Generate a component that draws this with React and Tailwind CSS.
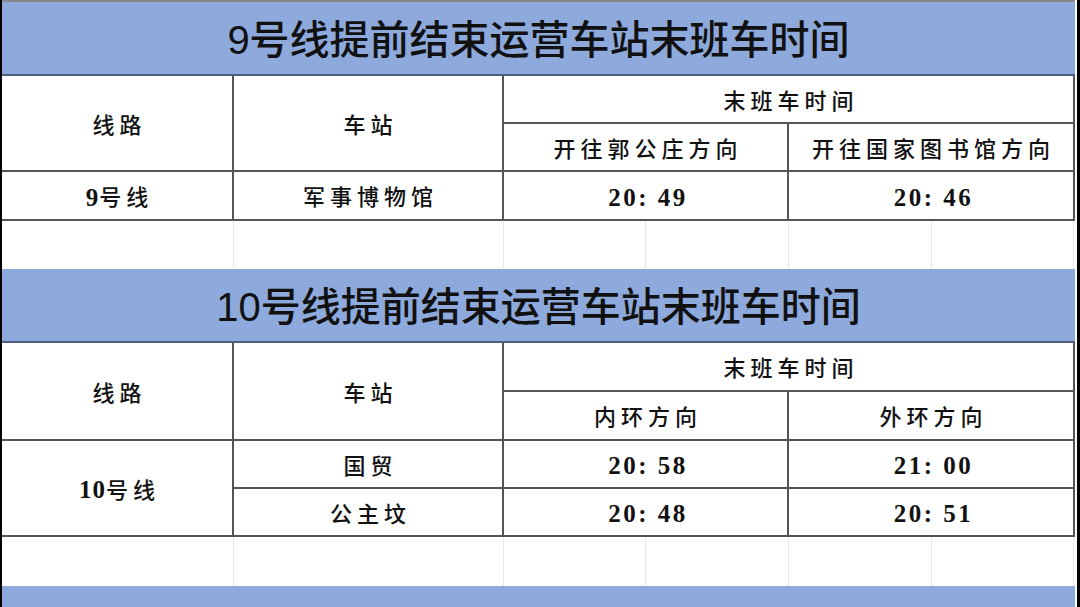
import React from 'react';

const body = { fontFamily: '"Liberation Serif", "Noto Sans CJK SC", serif' };
const title = { fontFamily: '"Liberation Sans", "Noto Sans CJK SC", sans-serif' };

// one table cell, border on the right and bottom
const Cell = ({ children, className = '' }) => (
  <div
    className={`flex items-center justify-center border-r-2 border-b-2 border-[#555] pt-[4px] pl-[5px] text-[22px] font-medium tracking-[5px] text-[#111] ${className}`}
    style={body}
  >
    {children}
  </div>
);

const Time = ({ children }) => (
  <span className="text-[25px] font-bold tracking-[2.5px]" style={{ fontFamily: '"Liberation Serif", serif' }}>
    {children}
  </span>
);

const Num = ({ children }) => (
  <span className="text-[25px] font-bold tracking-[1px]" style={{ fontFamily: '"Liberation Serif", serif' }}>
    {children}
  </span>
);

const Title = ({ children, className = '' }) => (
  <div
    className={`flex h-[74px] items-center justify-center bg-[#8eaadc] border-b-2 border-[#4f5d7e] pt-[4px] text-[40px] font-medium text-[#111] ${className}`}
    style={title}
  >
    {children}
  </div>
);

// blank spreadsheet row with faint gridlines
const EmptyRow = ({ h }) => (
  <div className={`flex ${h}`}>
    {[232, 270, 142, 143, 143, 142].map((w, i) => (
      <div key={i} className="border-r border-[#e8e8e8]" style={{ width: w }} />
    ))}
  </div>
);

const App = () => {
  return (
    <div className="flex w-[1080px] h-[607px] overflow-hidden bg-white">
      <div className="w-[2px] bg-black" />
      <div className="flex w-[1073px] flex-col">
        <div className="h-[2px] bg-[#888]" />
        <Title>9号线提前结束运营车站末班车时间</Title>

        {/* Line 9 table */}
        <div className="grid grid-cols-[232px_270px_285px_286px] grid-rows-[48px_48px_49px]">
          <Cell className="row-span-2">线路</Cell>
          <Cell className="row-span-2">车站</Cell>
          <Cell className="col-span-2">末班车时间</Cell>
          <Cell>开往郭公庄方向</Cell>
          <Cell>开往国家图书馆方向</Cell>
          <Cell><Num>9</Num>号线</Cell>
          <Cell>军事博物馆</Cell>
          <Cell><Time>20: 49</Time></Cell>
          <Cell><Time>20: 46</Time></Cell>
        </div>

        <EmptyRow h="h-[48px]" />
        <Title>10号线提前结束运营车站末班车时间</Title>

        {/* Line 10 table */}
        <div className="grid grid-cols-[232px_270px_285px_286px] grid-rows-[49px_49px_48px_48px]">
          <Cell className="row-span-2">线路</Cell>
          <Cell className="row-span-2">车站</Cell>
          <Cell className="col-span-2">末班车时间</Cell>
          <Cell>内环方向</Cell>
          <Cell>外环方向</Cell>
          <Cell className="row-span-2"><Num>10</Num>号线</Cell>
          <Cell>国贸</Cell>
          <Cell><Time>20: 58</Time></Cell>
          <Cell><Time>21: 00</Time></Cell>
          <Cell>公主坟</Cell>
          <Cell><Time>20: 48</Time></Cell>
          <Cell><Time>20: 51</Time></Cell>
        </div>

        <EmptyRow h="h-[49px]" />
        <div className="flex-1 bg-[#8eaadc]" />
      </div>
      <div className="w-[2px] bg-white" />
      <div className="w-[3px] bg-black" />
    </div>
  );
};

export default App;
